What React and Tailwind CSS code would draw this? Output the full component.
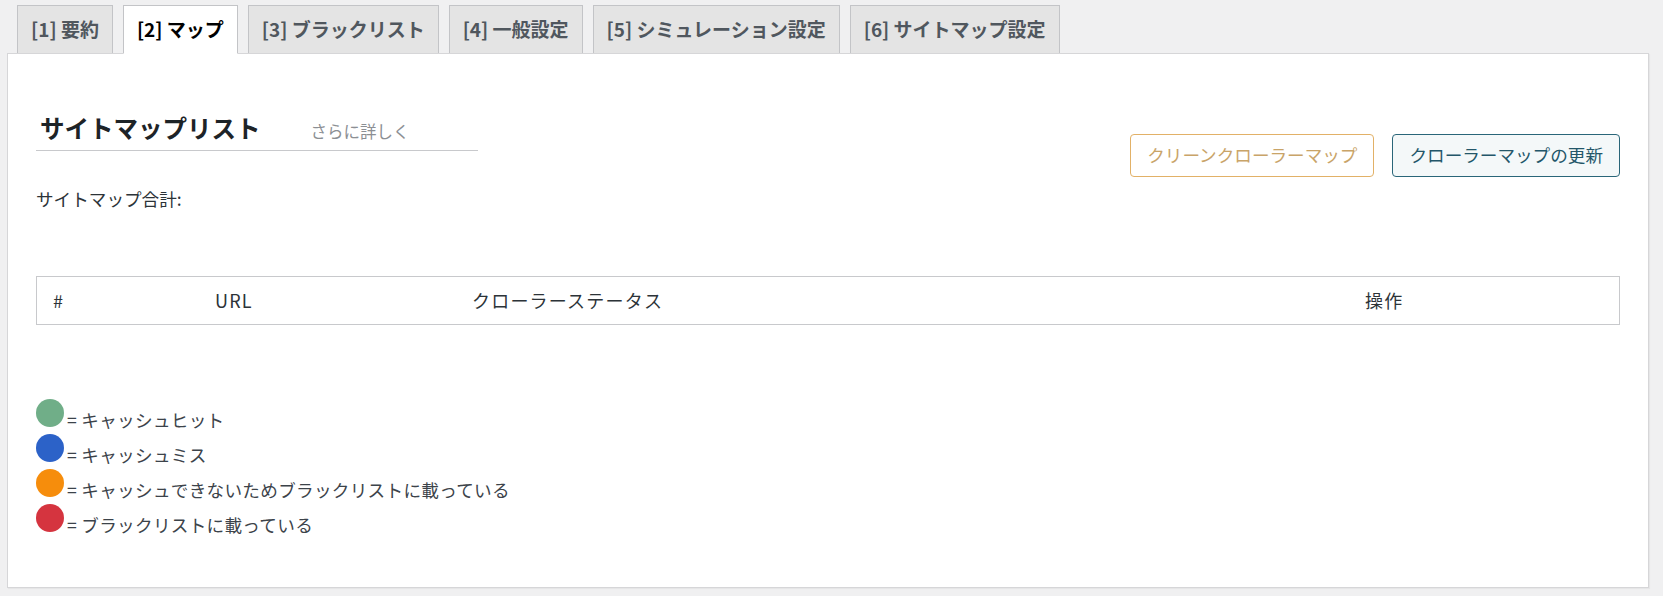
export default function App() {
  const tabs = [
    "[1] 要約",
    "[2] マップ",
    "[3] ブラックリスト",
    "[4] 一般設定",
    "[5] シミュレーション設定",
    "[6] サイトマップ設定",
  ];
  const legend = [
    ["bg-[#70ae88]", "キャッシュヒット"],
    ["bg-[#2c62c8]", "キャッシュミス"],
    ["bg-[#f68d0c]", "キャッシュできないためブラックリストに載っている"],
    ["bg-[#d5343f]", "ブラックリストに載っている"],
  ];
  return (
    <div className="min-h-[596px] bg-[#f0f0f1] pl-[7px] pr-[14px] pt-[5px] pb-[9px] [font-family:'Noto_Sans_CJK_JP','Noto_Sans',sans-serif]">
      <div className="relative z-10 flex items-end gap-[10px] pl-[10px]">
        {tabs.map((t, i) => (
          <div
            key={t}
            className={
              i === 1
                ? "h-[49px] -mb-px flex items-center px-[13px] border border-[#c3c4c7] border-b-white bg-white text-[19px] font-bold text-[#000]"
                : "h-[48px] flex items-center px-[13px] border border-b-0 border-[#c3c4c7] bg-[#e4e4e4] text-[19px] font-bold text-[#50575e]"
            }
          >
            {t}
          </div>
        ))}
      </div>
      <div className="bg-white border border-[#d6d6d8] shadow-[1px_1px_1px_rgba(0,0,0,0.04)] px-[28px] pt-[56px] pb-[48px]">
        <div className="flex items-start justify-between">
          <div>
            <div className="w-[442px] border-b border-[#c8c9cc] pb-[4px] flex items-baseline">
              <h2 className="pl-[4px] text-[24.5px] leading-[36px] font-bold text-[#1d2327]">
                サイトマップリスト
              </h2>
              <span className="ml-[50px] text-[16.5px] text-[#8c8f94]">さらに詳しく</span>
            </div>
            <p className="mt-[35px] text-[17.6px] leading-[26px] text-[#2c3338]">サイトマップ合計:</p>
          </div>
          <div className="mt-[24px] flex gap-[18px]">
            <button className="h-[43px] px-[16px] rounded-[4px] border border-[#e2b167] bg-white text-[17.6px] text-[#c9a468]">
              クリーンクローラーマップ
            </button>
            <button className="h-[43px] px-[16px] rounded-[4px] border border-[#2a6679] bg-[#f4f8f9] text-[17.6px] text-[#235669]">
              クローラーマップの更新
            </button>
          </div>
        </div>

        <div className="mt-[64px] h-[49px] border border-[#c8c9cc] grid grid-cols-[162px_257px_893px_1fr] items-center text-[18px] text-[#2c3338] tracking-[1.2px]">
          <div className="pl-[16px]">#</div>
          <div className="pl-[16px]">URL</div>
          <div className="pl-[16px]">クローラーステータス</div>
          <div className="pl-[16px]">操作</div>
        </div>

        <div className="mt-[74px] text-[17.6px] leading-[29px] text-[#3c434a] tracking-[0.3px]">
          {legend.map(([c, label]) => (
            <div key={label}>
              <span className={`inline-block w-[28px] h-[28px] rounded-full ${c}`}></span>
              <span className="ml-[3px]">= {label}</span>
            </div>
          ))}
        </div>
      </div>
    </div>
  );
}
